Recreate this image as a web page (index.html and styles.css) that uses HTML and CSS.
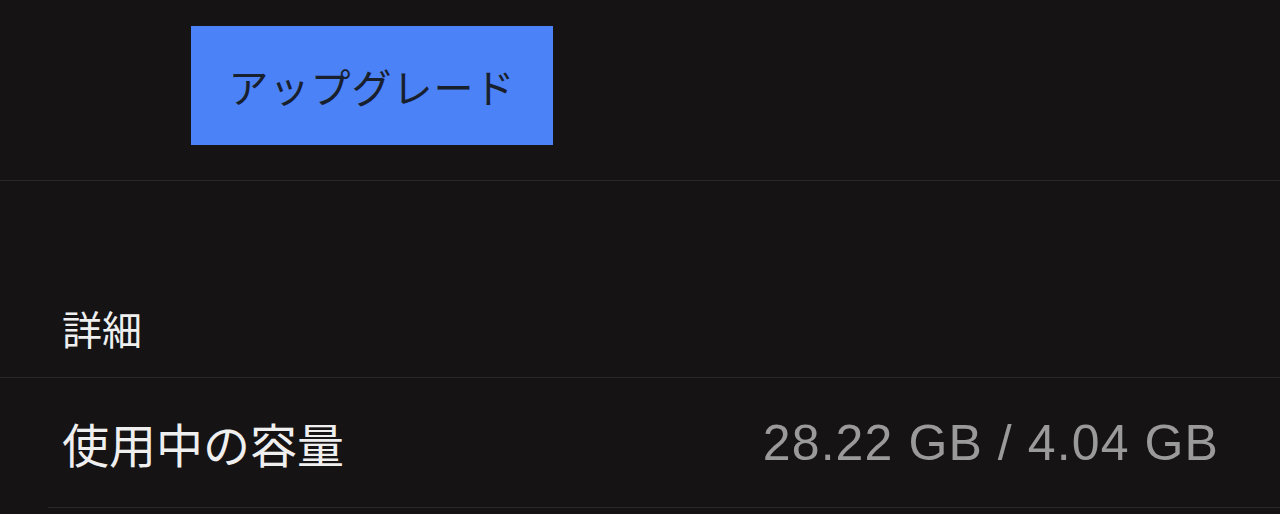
FILE: index.html
```
<!DOCTYPE html>
<html lang="ja">
<head>
<meta charset="utf-8">
<title>ストレージ</title>
<link rel="stylesheet" href="styles.css">
</head>
<body>
<div class="plan">
	<button class="btn-upgrade" type="button">アップグレード</button>
</div>
<div class="section-head">
	<h2>詳細</h2>
</div>
<ul class="detail-list">
	<li class="detail-row">
		<span class="label">使用中の容量</span>
		<span class="value">28.22 GB / 4.04 GB</span>
	</li>
</ul>
</body>
</html>
```
FILE: styles.css
```
*{ margin:0; padding:0; box-sizing:border-box;}
li{ list-style:none;}
html, body{ background:#151314; height:100%;}
body{ font-family:"Noto Sans CJK JP", "Liberation Sans", sans-serif; color:#efefef; overflow:hidden;}

.plan{ height:181px; padding:26px 0 0 191px; border-bottom:1px solid #2a2829;}
.btn-upgrade{ width:362px; height:119px; border:0; background:#4c82f7; color:#18202e; font-family:"Noto Sans CJK JP", sans-serif; font-size:40px; font-weight:400; letter-spacing:1px; cursor:pointer;}

.section-head{ height:197px; display:flex; align-items:flex-end; padding:0 0 25px 62px; border-bottom:1px solid #2a2829;}
.section-head h2{ font-size:40px; font-weight:400; line-height:1.2;}

.detail-list{ margin-left:48px;}
.detail-row{ height:130px; display:flex; align-items:center; justify-content:space-between; padding:0 62px 0 14px; border-bottom:1px solid #2a2829;}
.detail-row .label{ font-size:47px; letter-spacing:0;}
.detail-row .value{ font-family:"Liberation Sans", sans-serif; font-size:50px; letter-spacing:1.1px; margin-right:-1px; color:#9b9a9b;}
```
